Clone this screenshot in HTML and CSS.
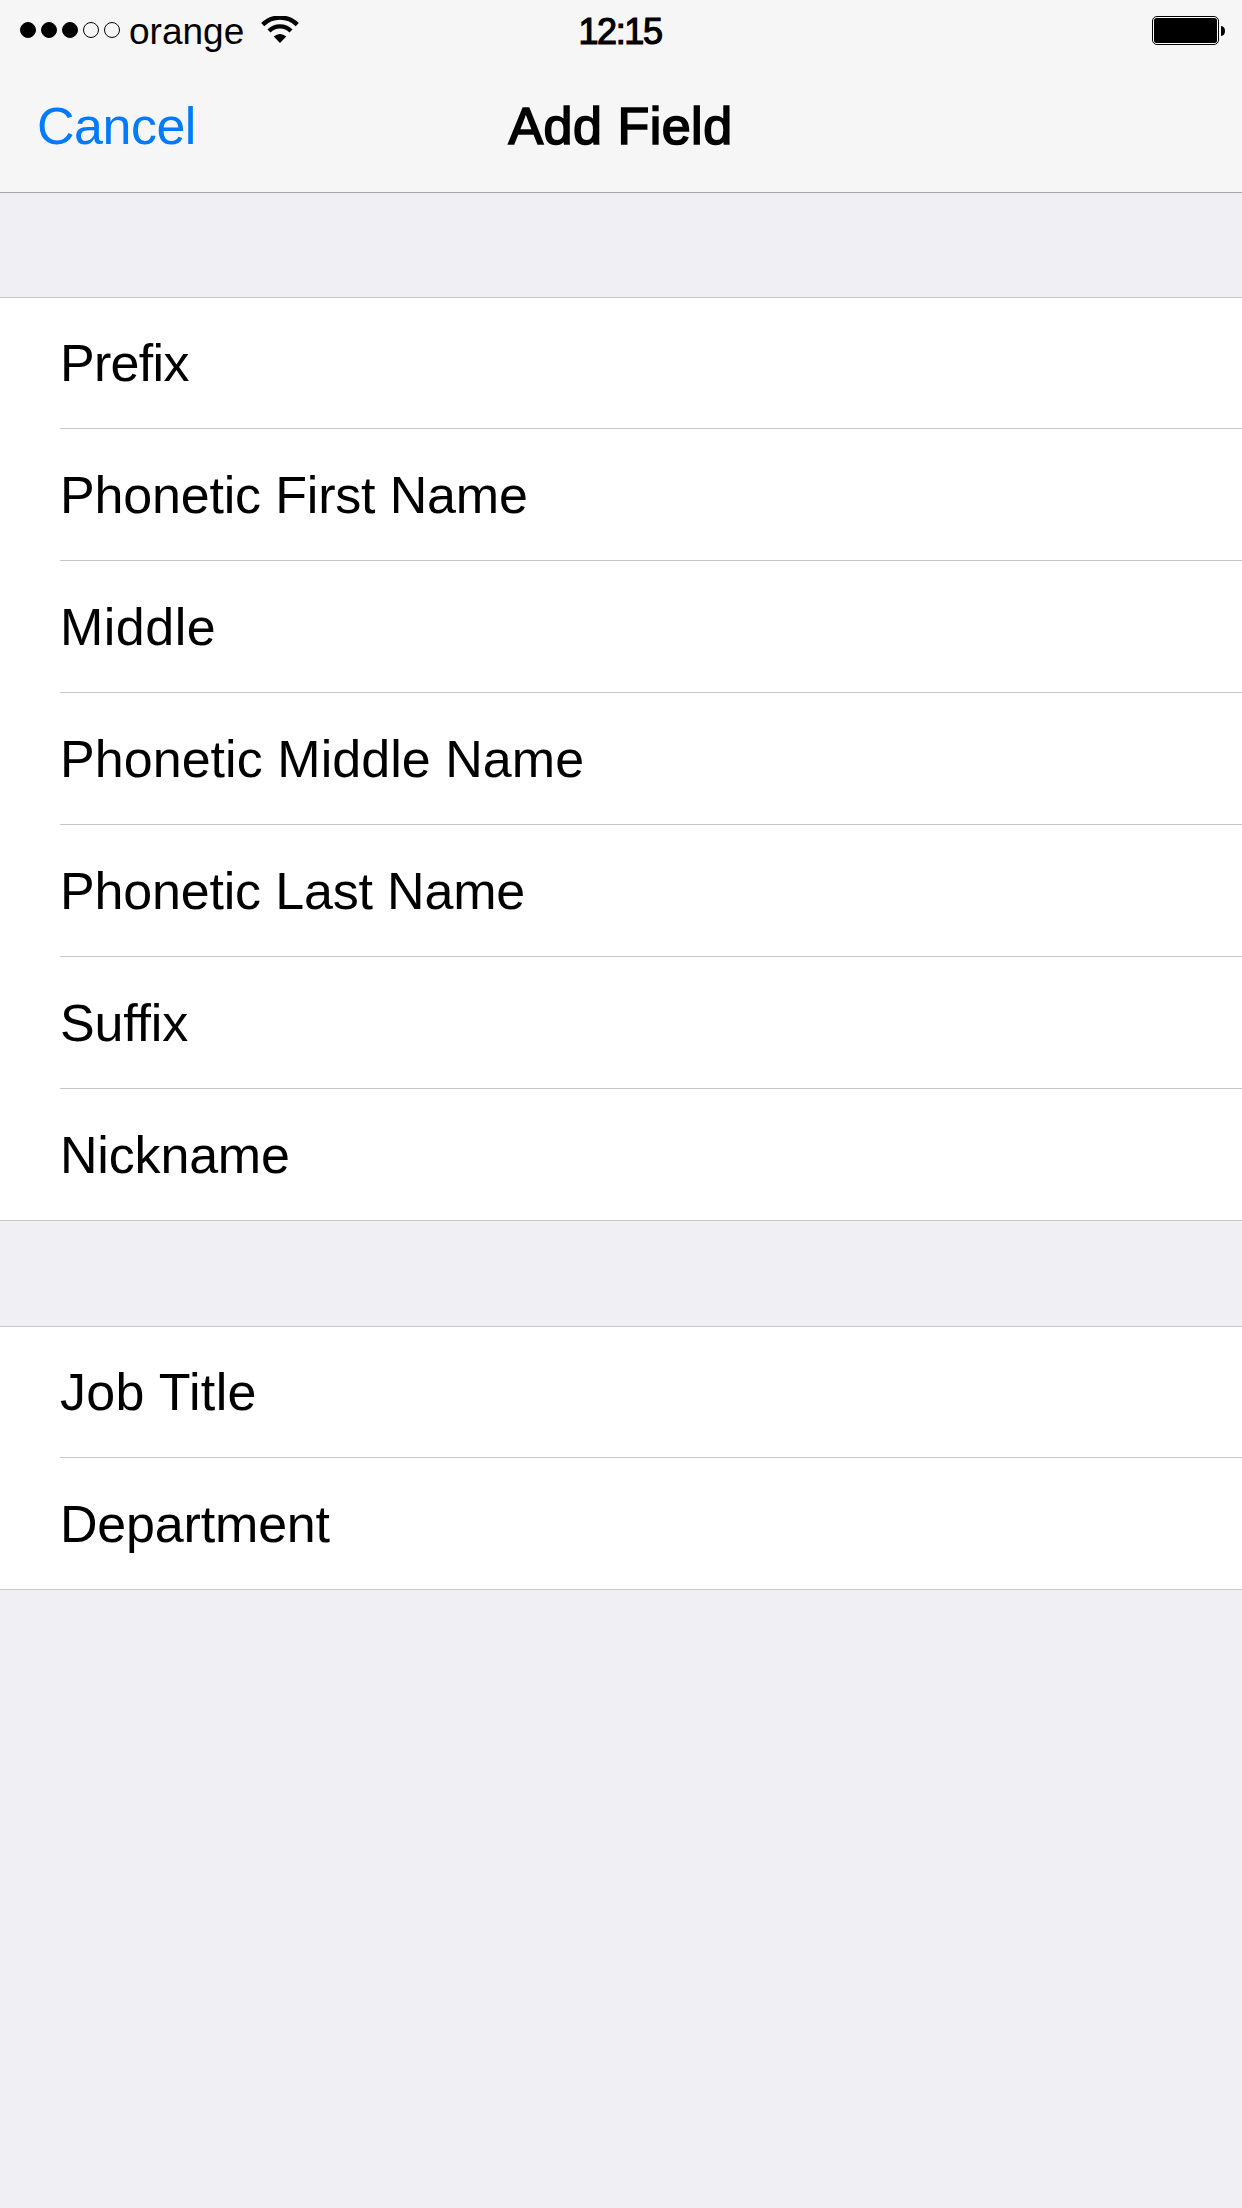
FILE: index.html
```
<!DOCTYPE html>
<html lang="en">
<head>
<meta charset="utf-8">
<title>Add Field</title>
<link rel="stylesheet" href="styles.css">
</head>
<body>
<header class="top">
  <div class="status">
    <div class="carrier">
      <span class="signal"><i class="dot full"></i><i class="dot full"></i><i class="dot full"></i><i class="dot"></i><i class="dot"></i></span>
      <span class="operator">orange</span>
      <svg class="wifi" width="38" height="28" viewBox="0 0 38 28">
        <path d="M1.7 8.6A24.6 24.6 0 0 1 36.3 8.6" fill="none" stroke="#000" stroke-width="4.300"/>
        <path d="M8 15A15.6 15.6 0 0 1 30 15" fill="none" stroke="#000" stroke-width="4.300"/>
        <path d="M12.8 20.6a8.8 8.8 0 0 1 12.4 0L19 27Z"/>
      </svg>
    </div>
    <time class="clock">12:15</time>
    <svg class="battery" width="74" height="30" viewBox="0 0 74 30">
      <rect x=".5" y=".5" width="66" height="28" rx="4.5" fill="#fff" stroke="#000"/>
      <rect x="2" y="2" width="63" height="25" rx="2.5"/>
      <path d="M69 10c2.700 0 4 2.300 4 5s-1.300 5-4 5Z"/>
    </svg>
  </div>
  <nav class="nav">
    <a class="cancel">Cancel</a>
    <h1 class="title">Add Field</h1>
  </nav>
</header>
<main>
  <ul class="group">
    <li class="row tighter">Prefix</li>
    <li class="row">Phonetic First Name</li>
    <li class="row looser">Middle</li>
    <li class="row normal">Phonetic Middle Name</li>
    <li class="row">Phonetic Last Name</li>
    <li class="row">Suffix</li>
    <li class="row">Nickname</li>
  </ul>
  <ul class="group">
    <li class="row loose">Job Title</li>
    <li class="row">Department</li>
  </ul>
</main>
</body>
</html>
```
FILE: styles.css
```
* { box-sizing: border-box; }
body {
  margin: 0;
  min-height: 2208px;
  background: #efeff4;
  color: #000;
  font-family: "Liberation Sans", Arial, sans-serif;
}
.top {
  height: 193px;
  background: #f6f6f6;
  border-bottom: 1px solid #a7a7aa;
}
.status {
  display: grid;
  grid-template-columns: 1fr auto 1fr;
  height: 60px;
  padding: 0 16px 0 20px;
}
.carrier { display: flex; }
.signal { display: flex; gap: 5px; padding-top: 22px; }
.dot {
  width: 16px;
  height: 16px;
  border: 1px solid #000;
  border-radius: 50%;
}
.full { background: #000; }
.operator {
  margin-left: 9px;
  width: 116px;
  padding-top: 12px;
  font-size: 37px;
  line-height: 40px;
  white-space: nowrap;
}
.wifi { margin: 16px 0 0 16px; }
.clock {
  padding: 12px 6px 0 0;
  font-size: 36px;
  line-height: 40px;
  letter-spacing: -1.4px;
  -webkit-text-stroke: 1.2px #000;
}
.battery { justify-self: end; margin-top: 16px; }
.nav {
  display: grid;
  grid-template-columns: 1fr auto 1fr;
  padding: 36px 38px 0 37px;
  font-size: 52px;
  line-height: 60px;
}
.cancel { color: #007aff; letter-spacing: -.5px; }
.title {
  margin: 0;
  font-size: 52px;
  font-weight: 400;
  letter-spacing: .5px;
  -webkit-text-stroke: 1.7px #000;
}
.group {
  margin: 104px 0 0;
  padding: 0 0 0 60px;
  list-style: none;
  background: #fff;
  border-top: 1px solid #c8c7cc;
  border-bottom: 1px solid #c8c7cc;
}
.group + .group { margin-top: 105px; }
.row {
  height: 132px;
  padding-top: 36px;
  border-bottom: 1px solid #c8c7cc;
  font-size: 52px;
  line-height: 60px;
  letter-spacing: -.18px;
}
.row:first-child { height: 131px; padding-top: 35px; }
.row:last-child { height: 131px; border-bottom: 0; }
.tighter { letter-spacing: -.7px; }
.normal { letter-spacing: .05px; }
.loose { letter-spacing: .35px; }
.looser { letter-spacing: .5px; }
```
